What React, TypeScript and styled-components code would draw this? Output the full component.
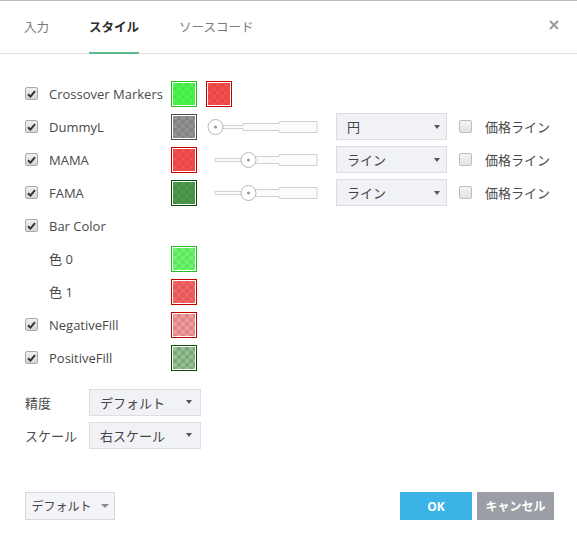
import styled, { createGlobalStyle } from "styled-components";

const GlobalStyle = createGlobalStyle`
  html, body {
    margin: 0;
    padding: 0;
    background: #ffffff;
  }
  body {
    font-family: "Open Sans", "Noto Sans CJK JP", sans-serif;
    color: #4a4a4a;
  }
`;

const Dialog = styled.div`
  width: 577px;
  height: 544px;
  box-sizing: border-box;
  border-top: 1px solid #b9b9b9;
  display: flex;
  flex-direction: column;
  background: #fff;
`;

const TabBar = styled.div`
  height: 52px;
  border-bottom: 1px solid #e0e0e0;
  display: flex;
  align-items: stretch;
  padding-left: 24px;
  padding-right: 18px;
`;

const Tab = styled.div<{ $active?: boolean }>`
  display: flex;
  align-items: center;
  margin-right: 40px;
  font-size: 12.5px;
  font-weight: ${(p) => (p.$active ? 700 : 400)};
  color: ${(p) => (p.$active ? "#2f2f2f" : "#7a7a7a")};
  border-bottom: 2px solid ${(p) => (p.$active ? "#5bba8c" : "transparent")};
  margin-bottom: -1px;
  padding-bottom: 1px;
  box-sizing: border-box;
`;

const Spacer = styled.div`
  flex: 1;
`;

const Close = styled.div`
  display: flex;
  align-items: center;
  padding-bottom: 4px;
`;

const Body = styled.div`
  padding: 23px 25px 0 25px;
  display: flex;
  flex-direction: column;
`;

const Row = styled.div`
  height: 33px;
  display: flex;
  align-items: center;
`;

const CheckCell = styled.div`
  width: 24px;
  display: flex;
  align-items: center;
`;

const Label = styled.div`
  width: 122px;
  font-size: 13px;
  color: #4a4a4a;
  white-space: nowrap;
`;

const Box = styled.span<{ $checked?: boolean }>`
  width: 13px;
  height: 13px;
  box-sizing: border-box;
  border: 1px solid ${(p) => (p.$checked ? "#a9a9a9" : "#bdbdbd")};
  border-radius: 2px;
  background: ${(p) =>
    p.$checked
      ? "linear-gradient(#f0f0f0, #d6d6d6)"
      : "linear-gradient(#f4f4f4, #e2e2e2)"};
  display: inline-flex;
  align-items: center;
  justify-content: center;
`;

const Swatch = styled.div<{ $border: string; $fill: string }>`
  width: 26px;
  height: 26px;
  box-sizing: border-box;
  border: 1px solid ${(p) => p.$border};
  padding: 1px;
  background: #fff;
  margin-right: 9px;
  &::after {
    content: "";
    display: block;
    width: 100%;
    height: 100%;
    background: linear-gradient(${(p) => p.$fill}, ${(p) => p.$fill}),
      repeating-conic-gradient(#c8c8c8 0 25%, #ffffff 0 50%) 0 0 / 8px 8px;
  }
`;

const SliderWrap = styled.div`
  width: 111px;
  height: 18px;
  margin-left: 1px;
  margin-right: 18px;
  display: flex;
`;

const Select = styled.div<{ $width: number; $right: number }>`
  width: ${(p) => p.$width}px;
  height: 27px;
  box-sizing: border-box;
  border: 1px solid #dcdee3;
  background: #f1f2f6;
  display: flex;
  align-items: center;
  padding: 0 ${(p) => p.$right}px 0 10px;
  font-size: 13px;
  color: #444;
`;

const SelectText = styled.span`
  flex: 1;
`;

const Caret = styled.span<{ $color?: string; $size?: number }>`
  width: 0;
  height: 0;
  border-left: ${(p) => p.$size ?? 3.5}px solid transparent;
  border-right: ${(p) => p.$size ?? 3.5}px solid transparent;
  border-top: ${(p) => (p.$size ?? 3.5) + 0.5}px solid ${(p) => p.$color ?? "#555"};
`;

const PriceLine = styled.div`
  display: flex;
  align-items: center;
  margin-left: 12px;
  gap: 13px;
  font-size: 13px;
  color: #4a4a4a;
`;

const SettingRow = styled.div`
  height: 26px;
  display: flex;
  align-items: center;
  margin-bottom: 7px;
`;

const SettingLabel = styled.div`
  width: 64px;
  font-size: 13px;
  color: #4a4a4a;
`;

const Settings = styled.div`
  margin-top: 15px;
  display: flex;
  flex-direction: column;
`;

const Footer = styled.div`
  margin-top: auto;
  height: 52px;
  padding: 0 23px 0 25px;
  display: flex;
  align-items: flex-start;
`;

const FooterInner = styled.div`
  display: flex;
  width: 100%;
  align-items: center;
`;

const DefaultBtn = styled.div`
  width: 90px;
  height: 28px;
  box-sizing: border-box;
  border: 1px solid #d6d8dd;
  background: #f3f4f8;
  display: flex;
  align-items: center;
  justify-content: center;
  gap: 9px;
  font-size: 12px;
  color: #444;
`;

const Button = styled.div<{ $bg: string; $width: number }>`
  width: ${(p) => p.$width}px;
  height: 28px;
  background: ${(p) => p.$bg};
  color: #fff;
  font-size: 12px;
  font-weight: 700;
  display: flex;
  align-items: center;
  justify-content: center;
  margin-left: 5px;
`;

function Check({ checked = true }: { checked?: boolean }) {
  return (
    <Box $checked={checked}>
      {checked && (
        <svg width="9" height="8" viewBox="0 0 9 8">
          <path
            d="M1 4.2 L3.4 6.6 L8 1.2"
            fill="none"
            stroke="#333"
            strokeWidth="2"
          />
        </svg>
      )}
    </Box>
  );
}

function Slider({ pos }: { pos: number }) {
  return (
    <SliderWrap>
      <svg width="111" height="18" viewBox="0 0 111 18">
        <path
          d="M8 7.5 H36 V5.5 H72 V3.5 H110 V14.5 H72 V12.5 H36 V10.5 H8 Z"
          fill="#fbfbfb"
          stroke="#cdd0d6"
          strokeWidth="1"
        />
        <circle cx={pos} cy="9" r="7.5" fill="#fff" stroke="#b3b7c0" />
        <circle cx={pos} cy="9" r="1.6" fill="#9a9ea6" />
      </svg>
    </SliderWrap>
  );
}

function Dropdown({
  text,
  width,
  right = 6,
}: {
  text: string;
  width: number;
  right?: number;
}) {
  return (
    <Select $width={width} $right={right}>
      <SelectText>{text}</SelectText>
      <Caret />
    </Select>
  );
}

function PriceToggle() {
  return (
    <PriceLine>
      <Check checked={false} />
      <span>価格ライン</span>
    </PriceLine>
  );
}

const plotRows = [
  { name: "DummyL", border: "#4d4d4d", fill: "rgba(110,110,110,0.75)", pos: 8.5, line: "円" },
  { name: "MAMA", border: "#c40000", fill: "rgba(240,40,40,0.82)", pos: 41.5, line: "ライン" },
  { name: "FAMA", border: "#0c4a0c", fill: "rgba(40,130,40,0.82)", pos: 41.5, line: "ライン" },
];

export default function App() {
  return (
    <>
      <GlobalStyle />
      <Dialog>
        <TabBar>
          <Tab>入力</Tab>
          <Tab $active>スタイル</Tab>
          <Tab>ソースコード</Tab>
          <Spacer />
          <Close>
            <svg width="10" height="10" viewBox="0 0 10 10">
              <path d="M1 1 L9 9 M9 1 L1 9" stroke="#9a9aa2" strokeWidth="2" />
            </svg>
          </Close>
        </TabBar>
        <Body>
          <Row>
            <CheckCell>
              <Check />
            </CheckCell>
            <Label>Crossover Markers</Label>
            <Swatch $border="#22bb22" $fill="rgba(40,240,40,0.82)" />
            <Swatch $border="#c40000" $fill="rgba(240,40,40,0.82)" />
          </Row>
          {plotRows.map((r) => (
            <Row key={r.name}>
              <CheckCell>
                <Check />
              </CheckCell>
              <Label>{r.name}</Label>
              <Swatch $border={r.border} $fill={r.fill} />
              <Slider pos={r.pos} />
              <Dropdown text={r.line} width={111} />
              <PriceToggle />
            </Row>
          ))}
          <Row>
            <CheckCell>
              <Check />
            </CheckCell>
            <Label>Bar Color</Label>
          </Row>
          <Row>
            <CheckCell />
            <Label>色 0</Label>
            <Swatch $border="#22bb22" $fill="rgba(60,240,60,0.75)" />
          </Row>
          <Row>
            <CheckCell />
            <Label>色 1</Label>
            <Swatch $border="#c40000" $fill="rgba(235,50,50,0.75)" />
          </Row>
          <Row>
            <CheckCell>
              <Check />
            </CheckCell>
            <Label>NegativeFill</Label>
            <Swatch $border="#c40000" $fill="rgba(230,90,90,0.6)" />
          </Row>
          <Row>
            <CheckCell>
              <Check />
            </CheckCell>
            <Label>PositiveFill</Label>
            <Swatch $border="#0c4a0c" $fill="rgba(60,140,60,0.55)" />
          </Row>
          <Settings>
            <SettingRow>
              <SettingLabel>精度</SettingLabel>
              <Dropdown text="デフォルト" width={112} right={8} />
            </SettingRow>
            <SettingRow>
              <SettingLabel>スケール</SettingLabel>
              <Dropdown text="右スケール" width={112} right={8} />
            </SettingRow>
          </Settings>
        </Body>
        <Footer>
          <FooterInner>
            <DefaultBtn>
              <span>デフォルト</span>
              <Caret $color="#8a8a8a" $size={4} />
            </DefaultBtn>
            <Spacer />
            <Button $bg="#3bb3e6" $width={72}>
              OK
            </Button>
            <Button $bg="#9b9ea4" $width={77}>
              キャンセル
            </Button>
          </FooterInner>
        </Footer>
      </Dialog>
    </>
  );
}
